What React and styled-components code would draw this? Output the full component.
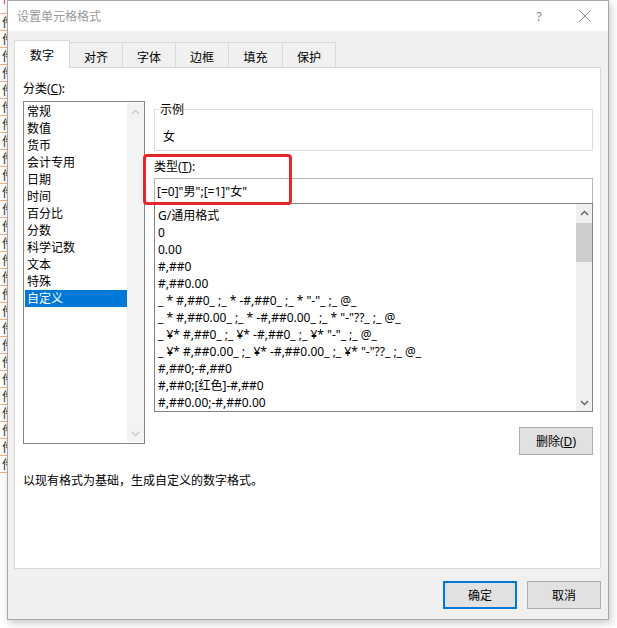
import React from 'react';
import styled, { createGlobalStyle } from 'styled-components';

const Global = createGlobalStyle`
  html, body { margin: 0; padding: 0; background: #fff; overflow: hidden; }
  body {
    font-family: "Noto Sans", "Noto Sans CJK SC", sans-serif;
    font-size: 12px;
    color: #000;
  }
  * { box-sizing: border-box; }
`;

const Page = styled.div`
  display: flex;
  align-items: flex-start;
  width: 617px;
  height: 628px;
`;

const Sheet = styled.div`
  width: 7px;
  flex: none;
  overflow: hidden;
  display: flex;
  flex-direction: column;
`;

const Cell = styled.div`
  height: ${p => p.$h}px;
  border-bottom: 1px solid #eeb28a;
  padding-left: 2px;
  font-family: "Noto Sans CJK SC", sans-serif;
  font-size: 12px;
  line-height: ${p => p.$h - 1}px;
  color: ${p => (p.$red ? '#e02020' : '#222')};
  white-space: nowrap;
  overflow: hidden;
`;

const CellText = styled.span`
  display: inline-block;
  transform: translateY(${p => p.$shift || 0}px);
`;

const Dialog = styled.div`
  flex: none;
  width: 602px;
  height: 620px;
  border: 1px solid #a8a8a8;
  background: #f0f0f0;
  display: flex;
  flex-direction: column;
  box-shadow: 2px 3px 8px rgba(0, 0, 0, 0.22);
`;

const TitleBar = styled.div`
  height: 30px;
  flex: none;
  background: #fff;
  display: flex;
  align-items: center;
  padding-left: 9px;
`;

const Title = styled.div`
  flex: 1;
  color: #999;
  font-size: 12px;
`;

const TitleButton = styled.div`
  width: 46px;
  height: 30px;
  display: flex;
  align-items: center;
  justify-content: center;
  color: #8c8c8c;
  font-size: 13px;
`;

const Body = styled.div`
  flex: 1;
  display: flex;
  flex-direction: column;
  padding: 9px 7px 10px 6px;
`;

const Tabs = styled.div`
  display: flex;
  align-items: flex-end;
  height: 27px;
  position: relative;
  z-index: 1;
`;

const Tab = styled.div`
  width: ${p => p.$w}px;
  height: ${p => (p.$active ? 28 : 25)}px;
  margin-bottom: ${p => (p.$active ? -1 : 0)}px;
  margin-left: ${p => (p.$first ? 0 : -1)}px;
  border: 1px solid #d9d9d9;
  border-bottom: none;
  background: ${p => (p.$active ? '#fff' : '#f0f0f0')};
  display: flex;
  align-items: center;
  justify-content: center;
  padding-top: ${p => (p.$active ? 1 : 3)}px;
  font-size: 12px;
  position: relative;
  z-index: ${p => (p.$active ? 2 : 1)};
`;

const Panel = styled.div`
  height: 502px;
  flex: none;
  border: 1px solid #d9d9d9;
  background: #fff;
  padding: 12px 7px 0 8px;
  display: flex;
  flex-direction: column;
`;

const Columns = styled.div`
  display: grid;
  grid-template-columns: 122px 1fr;
  column-gap: 9px;
  align-items: start;
`;

const LeftCol = styled.div`
  display: flex;
  flex-direction: column;
`;

const RightCol = styled.div`
  display: flex;
  flex-direction: column;
  padding-top: 21px;
`;

const Label = styled.div`
  line-height: 17px;
  height: 17px;
  margin-top: ${p => p.$mt || 0}px;
`;

const U = styled.span`
  text-decoration: underline;
  text-underline-offset: 1px;
`;

const ListBox = styled.div`
  height: ${p => p.$h}px;
  margin-top: ${p => p.$mt || 0}px;
  border: 1px solid ${p => p.$border};
  background: #fff;
  display: flex;
  overflow: hidden;
  padding: ${p => p.$pad};
`;

const Items = styled.div`
  flex: 1;
  min-width: 0;
  overflow: hidden;
  padding-top: ${p => p.$pt}px;
`;

const Item = styled.div`
  height: 17px;
  line-height: 17px;
  padding-left: ${p => p.$pl}px;
  white-space: pre;
  background: ${p => (p.$selected ? '#0078d7' : 'transparent')};
  color: ${p => (p.$selected ? '#fff' : '#000')};
`;

const ScrollBar = styled.div`
  width: ${p => p.$w}px;
  flex: none;
  background: ${p => p.$bg};
  display: flex;
  flex-direction: column;
`;

const ScrollArrow = styled.div`
  height: 17px;
  flex: none;
  display: flex;
  align-items: center;
  justify-content: center;
`;

const ScrollTrack = styled.div`
  flex: 1;
  padding-top: 2px;
`;

const Thumb = styled.div`
  height: 39px;
  background: #cdcdcd;
`;

const Group = styled.fieldset`
  margin: 0;
  padding: 10px 8px 5px 8px;
  border: 1px solid #dcdcdc;
  min-width: 0;
`;

const Legend = styled.legend`
  padding: 0 1px;
  margin-left: -4px;
  line-height: 17px;
  font-size: 12px;
`;

const SampleValue = styled.div`
  line-height: 17px;
  height: 17px;
`;

const TypeSection = styled.div`
  position: relative;
  margin-top: 7px;
  display: flex;
  flex-direction: column;
`;

const TypeInput = styled.div`
  height: 25px;
  margin-top: 3px;
  border: 1px solid #b4b4b4;
  border-bottom: none;
  padding-left: 2px;
  display: flex;
  align-items: center;
  white-space: pre;
`;

const Highlight = styled.div`
  position: absolute;
  left: -11px;
  top: -4px;
  width: 149px;
  height: 51px;
  border: 3px solid #e3262b;
  border-radius: 4px;
  pointer-events: none;
`;

const ButtonRow = styled.div`
  display: flex;
  justify-content: flex-end;
  gap: 10px;
  margin-top: ${p => p.$mt || 0}px;
`;

const Button = styled.button`
  width: 74px;
  height: 28px;
  padding: 0;
  background: #e1e1e1;
  border: ${p => (p.$default ? '2px solid #0078d7' : '1px solid #adadad')};
  font-family: inherit;
  font-size: 12px;
  color: #000;
  display: flex;
  align-items: center;
  justify-content: center;
`;

const Description = styled.div`
  margin-top: 17px;
  line-height: 17px;
`;

const Chevron = ({ dir, color }) => (
  <svg width="9" height="6" viewBox="0 0 9 6">
    <path
      d={dir === 'up' ? 'M1 5L4.5 1.5L8 5' : 'M1 1L4.5 4.5L8 1'}
      fill="none"
      stroke={color}
      strokeWidth="1.4"
    />
  </svg>
);

const CloseIcon = () => (
  <svg width="12" height="12" viewBox="0 0 12 12">
    <path d="M0.5 0.5L11.5 11.5M11.5 0.5L0.5 11.5" stroke="#8c8c8c" strokeWidth="1" fill="none" />
  </svg>
);

const categories = ['常规', '数值', '货币', '会计专用', '日期', '时间', '百分比', '分数', '科学记数', '文本', '特殊', '自定义'];

const formats = [
  'G/通用格式',
  '0',
  '0.00',
  '#,##0',
  '#,##0.00',
  '_ * #,##0_ ;_ * -#,##0_ ;_ * "-"_ ;_ @_',
  '_ * #,##0.00_ ;_ * -#,##0.00_ ;_ * "-"??_ ;_ @_',
  '_ ¥* #,##0_ ;_ ¥* -#,##0_ ;_ ¥* "-"_ ;_ @_',
  '_ ¥* #,##0.00_ ;_ ¥* -#,##0.00_ ;_ ¥* "-"??_ ;_ @_',
  '#,##0;-#,##0',
  '#,##0;[红色]-#,##0',
  '#,##0.00;-#,##0.00',
];

const tabs = [
  { label: '数字', w: 56 },
  { label: '对齐', w: 54 },
  { label: '字体', w: 54 },
  { label: '边框', w: 54 },
  { label: '填充', w: 55 },
  { label: '保护', w: 54 },
];

export default function App() {
  const rows = Array.from({ length: 27 });
  return (
    <>
      <Global />
      <Page>
        <Sheet>
          <Cell $h={14} $red>
            <CellText $shift={-9}>件</CellText>
          </Cell>
          {rows.map((_, i) => (
            <Cell key={i} $h={17}>
              <CellText>件</CellText>
            </Cell>
          ))}
        </Sheet>
        <Dialog>
          <TitleBar>
            <Title>设置单元格格式</Title>
            <TitleButton>?</TitleButton>
            <TitleButton>
              <CloseIcon />
            </TitleButton>
          </TitleBar>
          <Body>
            <Tabs>
              {tabs.map((t, i) => (
                <Tab key={t.label} $w={t.w} $first={i === 0} $active={i === 0}>
                  {t.label}
                </Tab>
              ))}
            </Tabs>
            <Panel>
              <Columns>
                <LeftCol>
                  <Label>
                    分类(<U>C</U>):
                  </Label>
                  <ListBox $h={343} $mt={4} $border="#828282" $pad="1px 0 1px 1px">
                    <Items $pt={0}>
                      {categories.map((c, i) => (
                        <Item key={c} $pl={2} $selected={i === categories.length - 1}>
                          {c}
                        </Item>
                      ))}
                    </Items>
                    <ScrollBar $w={17} $bg="#f3f3f3">
                      <ScrollArrow>
                        <Chevron dir="up" color="#c8c8c8" />
                      </ScrollArrow>
                      <ScrollTrack />
                      <ScrollArrow>
                        <Chevron dir="down" color="#c8c8c8" />
                      </ScrollArrow>
                    </ScrollBar>
                  </ListBox>
                </LeftCol>
                <RightCol>
                  <Group>
                    <Legend>示例</Legend>
                    <SampleValue>女</SampleValue>
                  </Group>
                  <TypeSection>
                    <Label>
                      类型(<U>T</U>):
                    </Label>
                    <TypeInput>[=0]"男";[=1]"女"</TypeInput>
                    <Highlight />
                  </TypeSection>
                  <ListBox $h={209} $border="#828282" $pad="0">
                    <Items $pt={3}>
                      {formats.map(f => (
                        <Item key={f} $pl={3}>
                          {f}
                        </Item>
                      ))}
                    </Items>
                    <ScrollBar $w={16} $bg="#f0f0f0">
                      <ScrollArrow>
                        <Chevron dir="up" color="#606060" />
                      </ScrollArrow>
                      <ScrollTrack>
                        <Thumb />
                      </ScrollTrack>
                      <ScrollArrow>
                        <Chevron dir="down" color="#606060" />
                      </ScrollArrow>
                    </ScrollBar>
                  </ListBox>
                  <ButtonRow $mt={15}>
                    <Button>
                      删除(<U>D</U>)
                    </Button>
                  </ButtonRow>
                </RightCol>
              </Columns>
              <Description>以现有格式为基础，生成自定义的数字格式。</Description>
            </Panel>
            <ButtonRow $mt={12}>
              <Button $default>确定</Button>
              <Button>取消</Button>
            </ButtonRow>
          </Body>
        </Dialog>
      </Page>
    </>
  );
}
